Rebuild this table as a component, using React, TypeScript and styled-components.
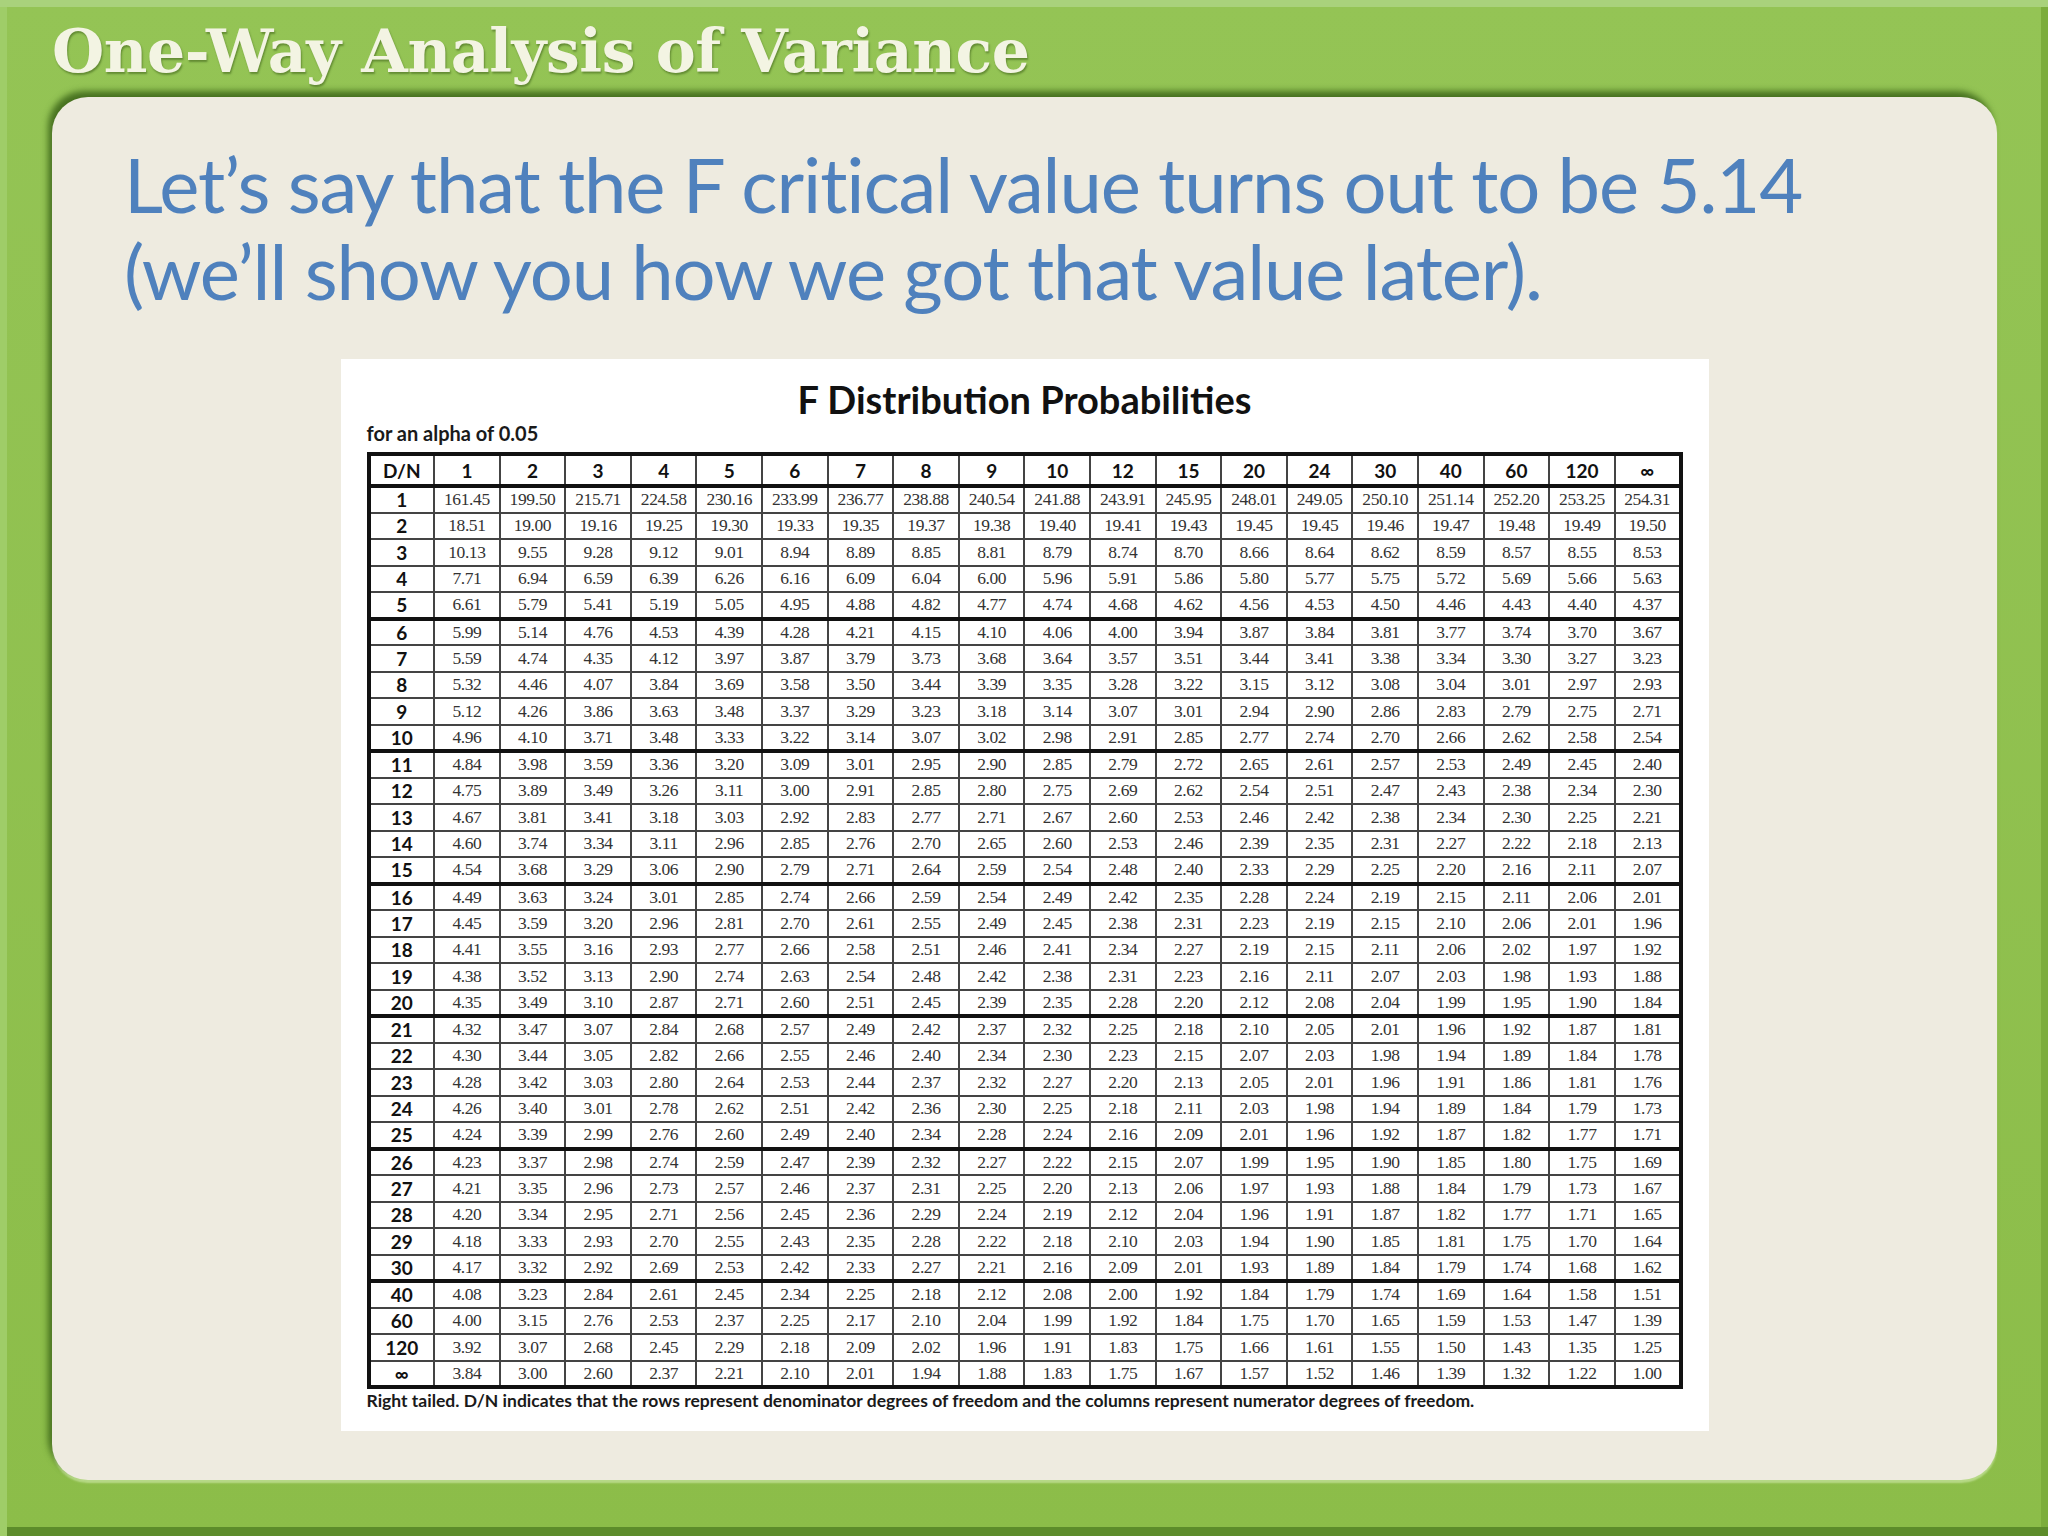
import styled, { createGlobalStyle } from "styled-components";

const GlobalStyle = createGlobalStyle`
  html, body {
    margin: 0;
    padding: 0;
  }
  body {
    background: #8fc04e;
  }
`;

const columns = ["1", "2", "3", "4", "5", "6", "7", "8", "9", "10", "12", "15", "20", "24", "30", "40", "60", "120", "∞"];

// denominator df, then the 19 numerator columns
const rows: [string, string][] = [
  ["1", "161.45 199.50 215.71 224.58 230.16 233.99 236.77 238.88 240.54 241.88 243.91 245.95 248.01 249.05 250.10 251.14 252.20 253.25 254.31"],
  ["2", "18.51 19.00 19.16 19.25 19.30 19.33 19.35 19.37 19.38 19.40 19.41 19.43 19.45 19.45 19.46 19.47 19.48 19.49 19.50"],
  ["3", "10.13 9.55 9.28 9.12 9.01 8.94 8.89 8.85 8.81 8.79 8.74 8.70 8.66 8.64 8.62 8.59 8.57 8.55 8.53"],
  ["4", "7.71 6.94 6.59 6.39 6.26 6.16 6.09 6.04 6.00 5.96 5.91 5.86 5.80 5.77 5.75 5.72 5.69 5.66 5.63"],
  ["5", "6.61 5.79 5.41 5.19 5.05 4.95 4.88 4.82 4.77 4.74 4.68 4.62 4.56 4.53 4.50 4.46 4.43 4.40 4.37"],
  ["6", "5.99 5.14 4.76 4.53 4.39 4.28 4.21 4.15 4.10 4.06 4.00 3.94 3.87 3.84 3.81 3.77 3.74 3.70 3.67"],
  ["7", "5.59 4.74 4.35 4.12 3.97 3.87 3.79 3.73 3.68 3.64 3.57 3.51 3.44 3.41 3.38 3.34 3.30 3.27 3.23"],
  ["8", "5.32 4.46 4.07 3.84 3.69 3.58 3.50 3.44 3.39 3.35 3.28 3.22 3.15 3.12 3.08 3.04 3.01 2.97 2.93"],
  ["9", "5.12 4.26 3.86 3.63 3.48 3.37 3.29 3.23 3.18 3.14 3.07 3.01 2.94 2.90 2.86 2.83 2.79 2.75 2.71"],
  ["10", "4.96 4.10 3.71 3.48 3.33 3.22 3.14 3.07 3.02 2.98 2.91 2.85 2.77 2.74 2.70 2.66 2.62 2.58 2.54"],
  ["11", "4.84 3.98 3.59 3.36 3.20 3.09 3.01 2.95 2.90 2.85 2.79 2.72 2.65 2.61 2.57 2.53 2.49 2.45 2.40"],
  ["12", "4.75 3.89 3.49 3.26 3.11 3.00 2.91 2.85 2.80 2.75 2.69 2.62 2.54 2.51 2.47 2.43 2.38 2.34 2.30"],
  ["13", "4.67 3.81 3.41 3.18 3.03 2.92 2.83 2.77 2.71 2.67 2.60 2.53 2.46 2.42 2.38 2.34 2.30 2.25 2.21"],
  ["14", "4.60 3.74 3.34 3.11 2.96 2.85 2.76 2.70 2.65 2.60 2.53 2.46 2.39 2.35 2.31 2.27 2.22 2.18 2.13"],
  ["15", "4.54 3.68 3.29 3.06 2.90 2.79 2.71 2.64 2.59 2.54 2.48 2.40 2.33 2.29 2.25 2.20 2.16 2.11 2.07"],
  ["16", "4.49 3.63 3.24 3.01 2.85 2.74 2.66 2.59 2.54 2.49 2.42 2.35 2.28 2.24 2.19 2.15 2.11 2.06 2.01"],
  ["17", "4.45 3.59 3.20 2.96 2.81 2.70 2.61 2.55 2.49 2.45 2.38 2.31 2.23 2.19 2.15 2.10 2.06 2.01 1.96"],
  ["18", "4.41 3.55 3.16 2.93 2.77 2.66 2.58 2.51 2.46 2.41 2.34 2.27 2.19 2.15 2.11 2.06 2.02 1.97 1.92"],
  ["19", "4.38 3.52 3.13 2.90 2.74 2.63 2.54 2.48 2.42 2.38 2.31 2.23 2.16 2.11 2.07 2.03 1.98 1.93 1.88"],
  ["20", "4.35 3.49 3.10 2.87 2.71 2.60 2.51 2.45 2.39 2.35 2.28 2.20 2.12 2.08 2.04 1.99 1.95 1.90 1.84"],
  ["21", "4.32 3.47 3.07 2.84 2.68 2.57 2.49 2.42 2.37 2.32 2.25 2.18 2.10 2.05 2.01 1.96 1.92 1.87 1.81"],
  ["22", "4.30 3.44 3.05 2.82 2.66 2.55 2.46 2.40 2.34 2.30 2.23 2.15 2.07 2.03 1.98 1.94 1.89 1.84 1.78"],
  ["23", "4.28 3.42 3.03 2.80 2.64 2.53 2.44 2.37 2.32 2.27 2.20 2.13 2.05 2.01 1.96 1.91 1.86 1.81 1.76"],
  ["24", "4.26 3.40 3.01 2.78 2.62 2.51 2.42 2.36 2.30 2.25 2.18 2.11 2.03 1.98 1.94 1.89 1.84 1.79 1.73"],
  ["25", "4.24 3.39 2.99 2.76 2.60 2.49 2.40 2.34 2.28 2.24 2.16 2.09 2.01 1.96 1.92 1.87 1.82 1.77 1.71"],
  ["26", "4.23 3.37 2.98 2.74 2.59 2.47 2.39 2.32 2.27 2.22 2.15 2.07 1.99 1.95 1.90 1.85 1.80 1.75 1.69"],
  ["27", "4.21 3.35 2.96 2.73 2.57 2.46 2.37 2.31 2.25 2.20 2.13 2.06 1.97 1.93 1.88 1.84 1.79 1.73 1.67"],
  ["28", "4.20 3.34 2.95 2.71 2.56 2.45 2.36 2.29 2.24 2.19 2.12 2.04 1.96 1.91 1.87 1.82 1.77 1.71 1.65"],
  ["29", "4.18 3.33 2.93 2.70 2.55 2.43 2.35 2.28 2.22 2.18 2.10 2.03 1.94 1.90 1.85 1.81 1.75 1.70 1.64"],
  ["30", "4.17 3.32 2.92 2.69 2.53 2.42 2.33 2.27 2.21 2.16 2.09 2.01 1.93 1.89 1.84 1.79 1.74 1.68 1.62"],
  ["40", "4.08 3.23 2.84 2.61 2.45 2.34 2.25 2.18 2.12 2.08 2.00 1.92 1.84 1.79 1.74 1.69 1.64 1.58 1.51"],
  ["60", "4.00 3.15 2.76 2.53 2.37 2.25 2.17 2.10 2.04 1.99 1.92 1.84 1.75 1.70 1.65 1.59 1.53 1.47 1.39"],
  ["120", "3.92 3.07 2.68 2.45 2.29 2.18 2.09 2.02 1.96 1.91 1.83 1.75 1.66 1.61 1.55 1.50 1.43 1.35 1.25"],
  ["∞", "3.84 3.00 2.60 2.37 2.21 2.10 2.01 1.94 1.88 1.83 1.75 1.67 1.57 1.52 1.46 1.39 1.32 1.22 1.00"],
];

const groupEnds = ["5", "10", "15", "20", "25", "30"];

const Slide = styled.div`
  width: 2048px;
  height: 1536px;
  box-sizing: border-box;
  display: flex;
  flex-direction: column;
  overflow: hidden;
  background: linear-gradient(#94c455, #8cbd49);
  box-shadow:
    inset 0 7px 0 #a9d27c,
    inset 7px 0 0 #9fcd68,
    inset 0 -9px 0 #5d8c2b,
    inset -7px 0 0 #7cad3c;
`;

const Header = styled.header`
  flex: none;
  height: 97px;
  padding-left: 52px;
  box-sizing: border-box;
`;

const SlideTitle = styled.h1`
  margin: 0;
  padding-top: 21px;
  font-family: "DejaVu Serif", serif;
  font-weight: 700;
  font-size: 60px;
  line-height: 1;
  letter-spacing: -0.4px;
  color: #f3f4e3;
  text-shadow: 1px 2px 2px rgba(40, 70, 10, 0.45);
  white-space: nowrap;
`;

const Panel = styled.main`
  flex: 1;
  margin: 0 51px 56px 52px;
  border-radius: 36px;
  background: #eeebe0;
  box-shadow:
    -4px -6px 6px rgba(45, 85, 15, 0.75),
    0 3px 2px rgba(215, 238, 180, 0.6);
  display: flex;
  flex-direction: column;
  align-items: center;
`;

const Lead = styled.p`
  align-self: stretch;
  margin: 0;
  padding: 43px 0 0 72px;
  font-family: Lato, "Noto Sans", sans-serif;
  font-size: 76px;
  line-height: 87px;
  letter-spacing: -1.1px;
  color: #4f81bd;
`;

const Figure = styled.figure`
  margin: 45px 0 0;
  width: 1368px;
  height: 1072px;
  box-sizing: border-box;
  padding: 18px 26px 0;
  background: #ffffff;
  display: flex;
  flex-direction: column;
`;

const FigureTitle = styled.div`
  font-family: Lato, "Noto Sans", sans-serif;
  font-weight: 700;
  font-size: 38px;
  line-height: 44px;
  color: #111;
  text-align: center;
`;

const AlphaNote = styled.div`
  margin-top: 1px;
  font-family: Lato, "Noto Sans", sans-serif;
  font-weight: 700;
  font-size: 20px;
  line-height: 22px;
  color: #1a1a1a;
`;

const Grid = styled.table`
  margin-top: 8px;
  width: 1316px;
  table-layout: fixed;
  border-collapse: collapse;
  border: 4px solid #111;
`;

const HeadCell = styled.th`
  height: 28px;
  padding: 0;
  border: 2px solid #444;
  border-bottom: 4px solid #111;
  font-family: Lato, "Noto Sans", sans-serif;
  font-weight: 700;
  font-size: 19px;
  color: #111;
  text-align: center;
  vertical-align: middle;
`;

const Row = styled.tr<{ $thick: boolean }>`
  height: 26.5px;

  & > td {
    border-bottom: ${(p) => (p.$thick ? "4px solid #111" : "2px solid #444")};
  }
`;

const Cell = styled.td<{ $label?: boolean }>`
  padding: 0;
  border-left: 2px solid #444;
  border-right: 2px solid #444;
  text-align: center;
  vertical-align: middle;
  white-space: nowrap;
  font-family: ${(p) => (p.$label ? 'Lato, "Noto Sans", sans-serif' : '"Liberation Serif", serif')};
  font-weight: ${(p) => (p.$label ? 700 : 400)};
  font-size: ${(p) => (p.$label ? "19px" : "17.5px")};
  color: ${(p) => (p.$label ? "#111" : "#333")};
  letter-spacing: ${(p) => (p.$label ? "0" : "-0.4px")};
`;

const Footnote = styled.div`
  margin-top: 2px;
  font-family: Lato, "Noto Sans", sans-serif;
  font-weight: 700;
  font-size: 17.5px;
  line-height: 20px;
  color: #1a1a1a;
  white-space: nowrap;
`;

function FTable() {
  return (
    <Grid>
      <thead>
        <tr>
          <HeadCell>D/N</HeadCell>
          {columns.map((c) => (
            <HeadCell key={c}>{c}</HeadCell>
          ))}
        </tr>
      </thead>
      <tbody>
        {rows.map(([label, values]) => (
          <Row key={label} $thick={groupEnds.includes(label)}>
            <Cell $label>{label}</Cell>
            {values.split(" ").map((v, i) => (
              <Cell key={i}>{v}</Cell>
            ))}
          </Row>
        ))}
      </tbody>
    </Grid>
  );
}

export default function App() {
  return (
    <>
      <GlobalStyle />
      <Slide>
        <Header>
          <SlideTitle>One-Way Analysis of Variance</SlideTitle>
        </Header>
        <Panel>
          <Lead>
            Let’s say that the F critical value turns out to be 5.14
            <br />
            (we’ll show you how we got that value later).
          </Lead>
          <Figure>
            <FigureTitle>F Distribution Probabilities</FigureTitle>
            <AlphaNote>for an alpha of 0.05</AlphaNote>
            <FTable />
            <Footnote>
              Right tailed. D/N indicates that the rows represent denominator degrees of freedom and the columns
              represent numerator degrees of freedom.
            </Footnote>
          </Figure>
        </Panel>
      </Slide>
    </>
  );
}
